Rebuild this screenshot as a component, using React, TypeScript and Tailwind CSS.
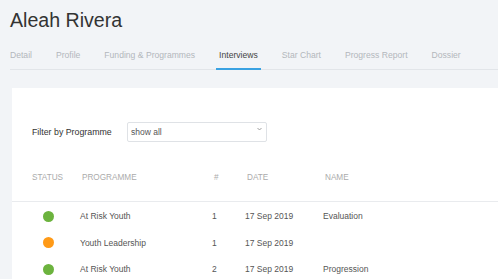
import React from "react";

const tabs = ["Detail", "Profile", "Funding & Programmes", "Interviews", "Star Chart", "Progress Report", "Dossier"];

const rows = [
  { color: "bg-[#6cb33e]", programme: "At Risk Youth", n: "1", date: "17 Sep 2019", name: "Evaluation" },
  { color: "bg-[#ff9a17]", programme: "Youth Leadership", n: "1", date: "17 Sep 2019", name: "" },
  { color: "bg-[#6cb33e]", programme: "At Risk Youth", n: "2", date: "17 Sep 2019", name: "Progression" },
];

export default function App() {
  return (
    <div
      className="w-full h-[279px] overflow-hidden bg-[#f2f4f7] flex flex-col"
      style={{ fontFamily: '"Liberation Sans", Arial, sans-serif' }}
    >
      <h1 className="pt-[10px] pl-[10px] text-[19.6px] leading-[20px] text-[#333] font-normal">Aleah Rivera</h1>

      <div className="mt-[19px] ml-[10px] border-b border-[#e2e5e9] flex gap-[18px]">
        {tabs.map((t, i) => (
          <div
            key={t}
            className={
              (i === 3
                ? "text-[#444] border-[#3aa2e2] "
                : "text-[#b3b7bc] border-transparent ") +
              (i === 0 ? "-ml-[3px] " : "") +
              "px-[3px] pb-[7px] border-b-2 -mb-px text-[8.6px] leading-[12px] whitespace-nowrap"
            }
          >
            {t}
          </div>
        ))}
      </div>

      <div className="mt-[18px] ml-[12px] flex-1 bg-white">
        <div className="pt-[34px] pl-[20px] flex items-center">
          <div className="w-[95px] text-[8.8px] leading-[12px] text-[#333]">Filter by Programme</div>
          <div className="relative w-[140px] h-[20px] border border-[#dfe2e6] rounded-[2px] pl-[3px] flex items-center text-[8.5px] text-[#555]">
            show all
            <svg className="absolute right-[4px] top-[4px]" width="5" height="4" viewBox="0 0 5 4">
              <path d="M0.5 1 L2.5 3 L4.5 1" fill="none" stroke="#888" strokeWidth="0.8" />
            </svg>
          </div>
        </div>

        <div className="mt-[30px] pl-[20px] pb-[17px] border-b border-[#e9ebee] grid grid-cols-[50px_132px_33px_78px_1fr] text-[8.2px] leading-[12px] text-[#ababab]">
          <div>STATUS</div>
          <div>PROGRAMME</div>
          <div>#</div>
          <div>DATE</div>
          <div>NAME</div>
        </div>

        <div className="pt-[1px]">
          {rows.map((r, i) => (
            <div
              key={i}
              className="h-[26.5px] pl-[18px] grid grid-cols-[50px_132px_33px_78px_1fr] items-center text-[8.5px] leading-[12px] text-[#555]"
            >
              <div className="pl-[13px] flex items-center">
                <span className={"block w-[11px] h-[11px] rounded-full " + r.color} />
              </div>
              <div>{r.programme}</div>
              <div>{r.n}</div>
              <div>{r.date}</div>
              <div>{r.name}</div>
            </div>
          ))}
        </div>
      </div>
    </div>
  );
}
